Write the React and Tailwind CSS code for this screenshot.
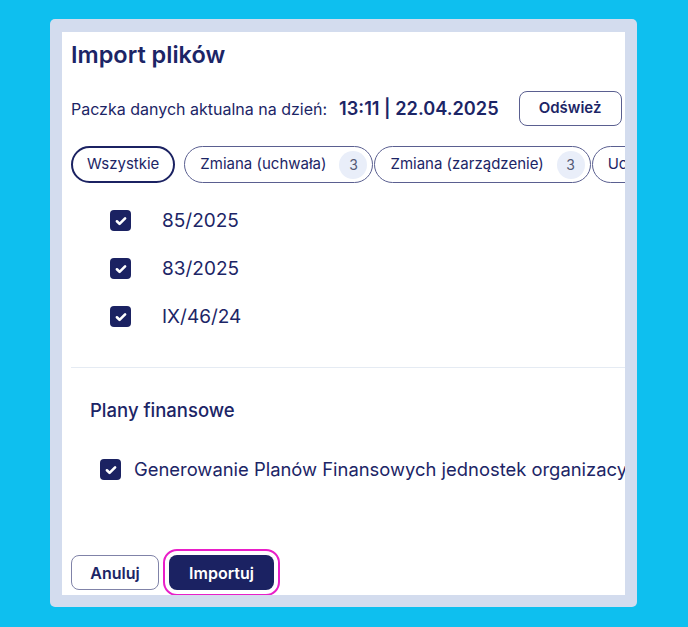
import React from 'react';

const navy = 'text-[#1c2566]';

const Check = ({ className = '' }) => (
  <span className={`flex h-[21px] w-[21px] shrink-0 items-center justify-center rounded-[4px] bg-[#1b2262] ${className}`}>
    <svg width="14" height="14" viewBox="0 0 24 24" fill="none" stroke="white" strokeWidth="4.5" strokeLinecap="round" strokeLinejoin="round">
      <path d="M5 12.5l4.5 4.5L19 7.5" />
    </svg>
  </span>
);

const Chip = ({ label, count, active }) => (
  <div
    className={`flex h-[37px] shrink-0 items-center whitespace-nowrap rounded-full bg-white text-[15px] ${navy} ${
      active ? 'border-2 border-[#1b2262] px-[14px]' : 'border border-[#5a5f90] pl-[15px] pr-[5px]'
    }`}
  >
    <span>{label}</span>
    {count && (
      <span className="ml-[13px] flex h-[28px] w-[28px] items-center justify-center rounded-full bg-[#e9eef9] text-[14px] text-[#555a75]">
        {count}
      </span>
    )}
  </div>
);

export default function App() {
  const items = ['85/2025', '83/2025', 'IX/46/24'];

  return (
    <div
      className="flex h-[627px] w-[688px] bg-[#0ebfef] pl-[50px] pt-[19px]"
      style={{ fontFamily: 'Inter, "Noto Sans", sans-serif' }}
    >
      <div className="h-[588px] w-[587px] rounded-[5px] bg-[#d3dcee] p-[12px] pt-[13px]">
        <div className="flex h-[563px] w-[563px] flex-col overflow-hidden bg-white pl-[9px]">
          <h1 className={`mt-[8px] text-[23.5px] font-semibold leading-[30px] ${navy}`}>Import plików</h1>

          <div className="mt-[21px] flex items-center">
            <span className={`text-[16px] ${navy}`}>Paczka danych aktualna na dzień:</span>
            <span className={`ml-[12px] text-[18.2px] font-semibold ${navy}`}>13:11 | 22.04.2025</span>
            <button className={`ml-[20px] h-[35px] w-[103px] shrink-0 rounded-[8px] border border-[#5a5f90] text-[15px] font-semibold ${navy}`}>
              Odśwież
            </button>
          </div>

          <div className="mt-[20px] flex items-center">
            <div className="mr-[9px]">
              <Chip label="Wszystkie" active />
            </div>
            <Chip label="Zmiana (uchwała)" count="3" />
            <div className="ml-[1px]">
              <Chip label="Zmiana (zarządzenie)" count="3" />
            </div>
            <div className="ml-px">
              <Chip label="Uchwała" count="3" />
            </div>
          </div>

          <div className="mt-[27px] flex flex-col gap-[27px] pl-[39px]">
            {items.map((it) => (
              <div key={it} className="flex items-center">
                <Check />
                <span className={`ml-[31px] text-[19px] leading-[21px] ${navy}`}>{it}</span>
              </div>
            ))}
          </div>

          <div className="mt-[40px] h-px w-full bg-[#e5ebf3]" />

          <div className={`mt-[29px] pl-[19px] text-[18.5px] font-medium ${navy}`}>Plany finansowe</div>

          <div className="mt-[31px] flex items-center pl-[29px]">
            <Check />
            <span className={`ml-[13px] whitespace-nowrap text-[18.4px] ${navy}`}>
              Generowanie Planów Finansowych jednostek organizacyjnych
            </span>
          </div>

          <div className="mt-auto mb-[5px] flex items-center">
            <button className={`h-[35px] w-[88px] rounded-[8px] border border-[#8083a8] text-[16px] font-semibold ${navy}`}>
              Anuluj
            </button>
            <button className="ml-[10px] h-[35px] w-[105px] rounded-[8px] bg-[#1b2262] text-[16px] font-semibold text-white outline-2 outline-offset-[4px] outline-[#e91ec8]">
              Importuj
            </button>
          </div>
        </div>
      </div>
    </div>
  );
}
